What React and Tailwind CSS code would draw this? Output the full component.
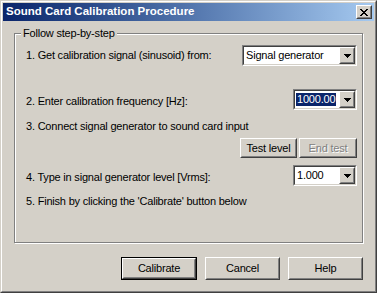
import React from "react";

const Raised = ({ className = "", children }) => (
  <div className={`border border-t-white border-l-white border-r-[#404040] border-b-[#404040] ${className}`}>
    <div className="w-full h-full border border-t-[#d4d0c8] border-l-[#d4d0c8] border-r-[#808080] border-b-[#808080] flex items-center justify-center">
      {children}
    </div>
  </div>
);

const Arrow = () => (
  <svg width="7" height="4" viewBox="0 0 7 4">
    <path d="M0 0h7v1h-1v1h-1v1h-1v1h-1v-1h-1v-1h-1v-1h-1z" fill="#000" />
  </svg>
);

const Combo = ({ width, value, selected }) => (
  <div className={`${width} h-[21px] border border-t-[#808080] border-l-[#808080] border-r-white border-b-white`}>
    <div className="h-full border border-t-[#404040] border-l-[#404040] border-r-[#d4d0c8] border-b-[#d4d0c8] bg-white flex items-center">
      <div className="flex-1 pl-[1px] flex items-center">
        <span className={`px-[1px] leading-[13px] ${selected ? "bg-[#0a246a] text-white" : ""}`}>{value}</span>
      </div>
      <Raised className="w-[16px] h-[17px] bg-[#d4d0c8]">
        <Arrow />
      </Raised>
    </div>
  </div>
);

const Button = ({ width, children, isDefault }) => {
  const inner = (
    <Raised className={`${isDefault ? "w-full h-full" : width + " h-[23px]"} bg-[#d4d0c8]`}>
      <span>{children}</span>
    </Raised>
  );
  if (isDefault) {
    return <div className={`${width} h-[23px] border border-black`}>{inner}</div>;
  }
  return inner;
};

export default function App() {
  return (
    <div className="w-[377px] h-[293px] bg-[#d4d0c8] font-['Liberation_Sans',Arial,sans-serif] text-[11px] tracking-[-0.2px] whitespace-nowrap text-black border border-t-[#d4d0c8] border-l-[#d4d0c8] border-r-[#404040] border-b-[#404040]">
      <div className="h-full border border-t-white border-l-white border-r-[#808080] border-b-[#808080] p-px flex flex-col">
        {/* title bar */}
        <div className="h-[18px] bg-gradient-to-r from-[#0a246a] to-[#a6caf0] flex items-center justify-between pl-[3px] pr-[2px]">
          <span className="text-white font-bold text-[11.5px] tracking-normal">Sound Card Calibration Procedure</span>
          <Raised className="w-[16px] h-[14px] bg-[#d4d0c8]">
            <svg width="8" height="7" viewBox="0 0 8 7">
              <path
                d="M0 0h2v1h1v1h2v-1h1v-1h2v1h-1v1h-1v1h-1v1h1v1h1v1h1v1h-2v-1h-1v-1h-2v1h-1v1h-2v-1h1v-1h1v-1h1v-1h-1v-1h-1v-1h-1z"
                fill="#000"
              />
            </svg>
          </Raised>
        </div>

        {/* group box */}
        <div className="relative mt-[12px] ml-[11px] w-[349px] h-[210px] border border-[#808080] shadow-[inset_1px_1px_0_#fff,1px_1px_0_#fff] flex flex-col">
          <span className="absolute left-[6px] top-[-8px] px-[2px] bg-[#d4d0c8] leading-[14px]">Follow step-by-step</span>

          <div className="mt-[11px] h-[21px] flex items-center justify-between pl-[11px] pr-[5px]">
            <span>1. Get calibration signal (sinusoid) from:</span>
            <Combo width="w-[115px]" value="Signal generator" />
          </div>

          <div className="mt-[23px] h-[21px] flex items-center justify-between pl-[11px] pr-[5px]">
            <span className="pt-[4px]">2. Enter calibration frequency [Hz]:</span>
            <Combo width="w-[64px]" value="1000.00" selected />
          </div>

          <div className="mt-[10px] h-[13px] flex items-center pl-[11px]">
            <span>3. Connect signal generator to sound card input</span>
          </div>

          <div className="mt-[5px] h-[20px] flex justify-end gap-[2px] pr-[5px]">
            <Raised className="w-[57px] h-[20px] bg-[#d4d0c8]">
              <span>Test level</span>
            </Raised>
            <Raised className="w-[58px] h-[20px] bg-[#d4d0c8]">
              <span className="text-[#808080] [text-shadow:1px_1px_0_#fff]">End test</span>
            </Raised>
          </div>

          <div className="mt-[7px] h-[21px] flex items-center justify-between pl-[11px] pr-[5px]">
            <span className="pt-[4px]">4. Type in signal generator level [Vrms]:</span>
            <Combo width="w-[64px]" value="1.000" />
          </div>

          <div className="mt-[9px] h-[13px] flex items-center pl-[11px]">
            <span>5. Finish by clicking the 'Calibrate' button below</span>
          </div>
        </div>

        {/* bottom buttons */}
        <div className="mt-[14px] flex justify-end gap-[8px] pr-[11px]">
          <Button width="w-[76px]" isDefault>Calibrate</Button>
          <Button width="w-[75px]">Cancel</Button>
          <Button width="w-[75px]">Help</Button>
        </div>
      </div>
    </div>
  );
}
